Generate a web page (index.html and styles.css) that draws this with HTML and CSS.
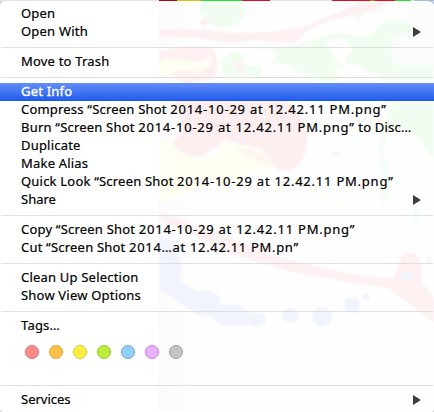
FILE: index.html
```
<!DOCTYPE html>
<html lang="en">
<head>
<meta charset="utf-8">
<title>Context menu</title>
<link rel="stylesheet" href="styles.css">
</head>
<body>
<div class="desktop">
<svg class="wallpaper" width="434" height="412" viewBox="0 0 434 412" aria-hidden="true">
  <defs><filter id="soft"><feGaussianBlur stdDeviation="1"/></filter>
  <linearGradient id="edge"><stop offset="0" stop-color="#fbfbfb"/><stop offset="1" stop-color="#fefefe"/></linearGradient></defs>
  <path fill="#fefefe" d="M159 1h275v410H159z"/>
  <path fill="url(#edge)" d="M159 1h38v410h-38z"/>
  <g filter="url(#soft)">
    <path fill="#f2fdf2" d="M201 1h40q6 8 2 17-5 9-17 10-18 0-20-11l-7-5zM434 25v55h-50l-28-15-22 2q14 15-8 15l-24-9-22-8-28-4 4-13 40-3 36-12 36 3 18-16zM220 62l14-12 12 6-4 8 20 2-2 12h-35zM350 14l8-6 7 5-6 8zM395 101h39v58q-10-9-17-24l-22-9-15 5q8-15 15-30z"/>
    <path fill="#f6fdf6" d="M384 125l6 3-7 22 8 28-2 22-8 4 0-12 2-18-5-22zM414 206l6 3-2 15-5-5z"/>
    <path fill="#fff" d="M252 53l17-5 8 8-8 11-16-3zM326 41l19-3 8 12-8 9 4 9-12-6zM278 65q13-3 20 7-6 10-17 0z"/>
    <path fill="#fdf0f1" d="M159 29l50 1 26 3 39-1 26-4 34-14 30-13h28l-18 10-40 8-25 10-15 14-38-3-26 3-33-5-38-2zM159 52l21-5 28-1q13 5 8 32l-32 5-25-15zM205 17l5 5-5 5-7-5zM233 64l8-3 4 9-5 5z"/>
    <path fill="#fdeff0" d="M175 101h110q16 10 20 25 5 22-3 33-6 12-20 12l-20-9-16-15-20-8-21 16q-18 6-34-11 12-10 10-22z"/>
    <path fill="#fefef3" d="M159 61l13-3 28 4 12-7-1 10-10 7-20-2-22 8zM163 1h36l-13 8zM160 139l12 2q14 23 42 14l8-16q8 10 16 6 25 0 33 15 7 11-3 15l-18-4-18 14-35 3-37 14z"/>
    <path fill="#fef5f1" d="M235 148q23 0 35 12 2 6-3 6l-15-9z"/>
    <path fill="#fdf1f2" d="M159 212l62 22 53 22 71 17 49 6q5-26 15-27 17 2 12 29l13 17v25l-20-16-25-19-37-5-60-11-60-18-43-21-30-13z"/>
    <path fill="#f1f4fd" d="M159 235l16 6 8 28-4 9q11 14 30 13 13 3 11 14h20l10 8q18-3 15 10-5 6-16 2l-18 2-10-2-9-8-13-1-22-15q-4-6-18-10z"/>
    <path fill="#f1f4fd" d="M400 275q7-5 14 1-4 6-14 2z"/>
    <ellipse cx="290" cy="315" rx="9" ry="7" fill="#f1f4fd"/><circle cx="322" cy="317" r="10" fill="#f1f4fd"/><circle cx="352" cy="305" r="8" fill="#f1f4fd"/><circle cx="366" cy="297" r="3.5" fill="#f3f4fc"/>
    <circle cx="416" cy="215" r="3.5" fill="#f3fcf3"/><circle cx="336" cy="154" r="4" fill="#f3fcf3"/><circle cx="429" cy="259" r="2" fill="#f3f3f3"/>
    <path fill="none" stroke="#fefef3" stroke-width="2" d="M290 178l52 28"/>
    <path fill="#fbfcfb" d="M391 34h43v32h-36q-7-4-7-15zM412 1h22v33h-22z"/>
  </g>
  <path fill="#fff" d="M0 1h158v411H0z"/>
  <path fill="#e3e3e3" d="M0 0h434v1H0z"/>
  <path fill="#a8001c" d="M159 0h18v1h-18z"/>
  <path fill="#d6be20" d="M177 0h24v1h-24z"/>
  <path fill="#26df32" d="M201 0h41v1h-41zM395 0h16v1h-16z"/>
  <path fill="#df0c25" d="M242 0h28v1h-28zM332 0h63v1h-63z"/>
  <path fill="#8b9c15" d="M370 0h5v1h-5z"/>
  <path fill="#a9b9d9" d="M414 0h20v1h-20zM429 1h3l2 1v3q-1-3-5-4z"/>
  <path fill="#d5d5d5" d="M0 1h4q-3 1-4 4zM0 408q0 3 3 4H0zM434 408v4h-3q3-1 3-4z"/>
</svg>
<ul class="menu">
  <li class="item"><span>Open</span></li>
  <li class="item"><span>Open With</span><i class="arrow"></i></li>
  <li class="separator"></li>
  <li class="item"><span>Move to Trash</span></li>
  <li class="separator"></li>
  <li class="item selected"><span>Get Info</span></li>
  <li class="item"><span>Compress “Screen Shot <b>2014-10-29 at 12.42.11 PM.png”</b></span></li>
  <li class="item"><span>Burn “Screen Shot <b>2014-10-29 at 12.42.11 PM.png”</b> to Disc…</span></li>
  <li class="item"><span>Duplicate</span></li>
  <li class="item"><span>Make Alias</span></li>
  <li class="item"><span>Quick Look “Screen Shot <b>2014-10-29 at 12.42.11 PM.png”</b></span></li>
  <li class="item tight"><span>Share</span><i class="arrow"></i></li>
  <li class="separator"></li>
  <li class="item"><span>Copy “Screen Shot <b>2014-10-29 at 12.42.11 PM.png”</b></span></li>
  <li class="item"><span>Cut “Screen Shot <b class="short">2014…at 12.42.11 PM.pn”</b></span></li>
  <li class="separator"></li>
  <li class="item"><span>Clean Up Selection</span></li>
  <li class="item"><span>Show View Options</span></li>
  <li class="separator"></li>
  <li class="item"><span>Tags…</span></li>
  <li class="tags"><i class="tag red"></i><i class="tag orange"></i><i class="tag yellow"></i><i class="tag green"></i><i class="tag blue"></i><i class="tag purple"></i><i class="tag gray"></i></li>
  <li class="separator"></li>
  <li class="item tight"><span>Services</span><i class="arrow"></i></li>
</ul>
</div>
</body>
</html>
```
FILE: styles.css
```
* { box-sizing: border-box; }
body { margin: 0; background: #fff; overflow: hidden; }
.desktop { position: relative; width: 434px; height: 412px; }
.wallpaper { position: absolute; inset: 0; display: block; }
.menu {
  position: relative;
  margin: 0;
  padding: 5px 0 0;
  list-style: none;
  font: 13px/18px "Noto Sans", "Open Sans", sans-serif;
  letter-spacing: 0.2px;
  color: #000;
  -webkit-text-stroke: 0.2px currentColor;
}
.item {
  display: flex;
  align-items: center;
  justify-content: space-between;
  height: 18px;
  padding: 0 13px 0 21px;
  white-space: nowrap;
}
.item span { margin-top: -2px; }
.item b { font-weight: inherit; letter-spacing: 0.77px; }
.item b.short { letter-spacing: 0.68px; }
.tight { letter-spacing: 0; }
.selected {
  color: #fff;
  background: linear-gradient(#648ef6, #245eee 94%, #1854dc);
  -webkit-text-stroke-width: 0.35px;
}
.separator { height: 12px; padding: 6px 1px 5px; }
.separator::before { content: ""; display: block; height: 1px; background: #dfdfdf; }
.arrow {
  width: 8px;
  height: 10px;
  background: #3e3e3e;
  clip-path: polygon(0 0, 100% 50%, 0 100%);
}
.tags { display: flex; gap: 10px; height: 44px; padding: 10px 0 0 25px; }
.tag { width: 14px; height: 14px; border: 1px solid; border-radius: 50%; }
.red { background: #ff8a8a; border-color: #d97474; }
.orange { background: #ffc14a; border-color: #f39b2b; }
.yellow { background: #ffec43; border-color: #d9c93a; }
.green { background: #bced3b; border-color: #91c52c; }
.blue { background: #94d0ff; border-color: #6da4ce; }
.purple { background: #e9b2ff; border-color: #cb7aed; }
.gray { background: #c5c5c5; border-color: #a0a0a0; }
```
